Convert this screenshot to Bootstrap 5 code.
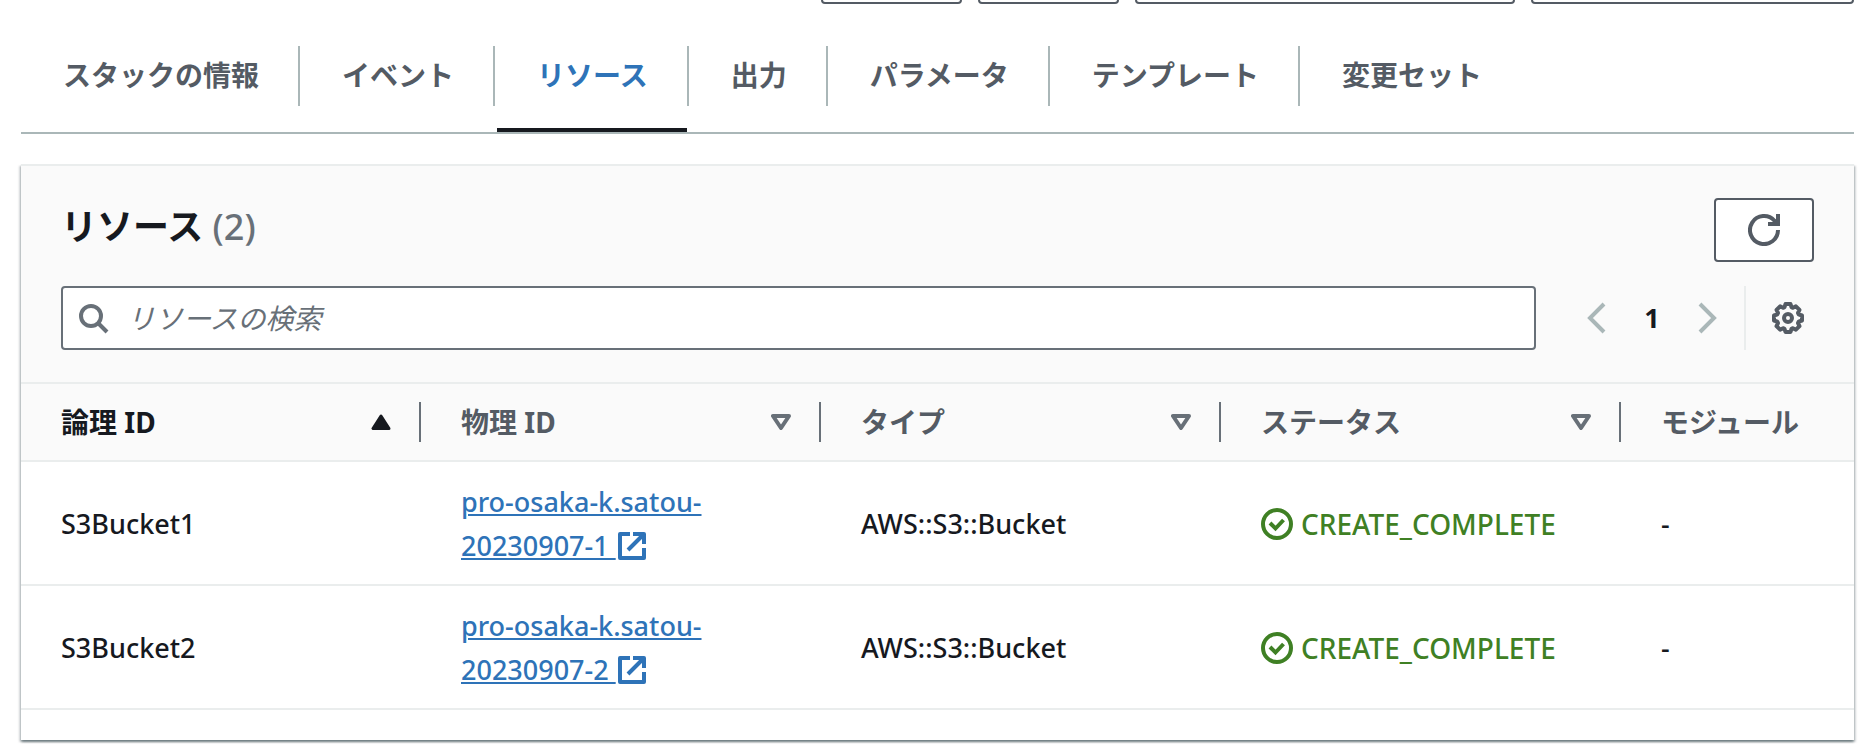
<!DOCTYPE html>
<html lang="ja">
<head>
<meta charset="utf-8">
<meta name="viewport" content="width=device-width, initial-scale=1">
<title>スタックのリソース</title>
<link href="https://cdn.jsdelivr.net/npm/bootstrap@5.3.0/dist/css/bootstrap.min.css" rel="stylesheet">
<style>
  :root { --ink: #16191f; --slate: #545b64; --steel: #687078; --mist: #aab7b8; --hair: #eaeded; --azure: #2e73b8; --leaf: #3f8024; }
  body { font-family: "Noto Sans", "Noto Sans CJK JP", sans-serif; font-size: 27px; line-height: 44px; color: var(--ink); background: #fff; }
  svg { display: block; flex: none; }
  .page { padding: 0 20px 14px 21px; }

  .stack-actions { height: 4px; gap: 16px; overflow: hidden; }
  .stack-actions .btn { height: 64px; border: 2px solid var(--slate); border-radius: 4px; background: #fff; }
  .w-short { width: 141px; }
  .w-long { width: 380px; }
  .w-mid { width: 323px; }

  .stack-tabs { padding-top: 42px; border-bottom: 2px solid var(--mist); font-size: 28px; font-weight: 700; }
  .stack-tabs .nav-item { display: flex; align-items: flex-start; padding-left: 2px; }
  .stack-tabs .nav-item:not(:last-child)::after { content: ""; width: 2px; height: 60px; background: var(--mist); }
  .stack-tabs .nav-link { height: 86px; padding: 6px 39px 0 40px; line-height: 46px; color: var(--slate); border: 0; border-bottom: 4px solid transparent; border-radius: 0; }
  .stack-tabs .nav-link.active { color: var(--azure); border-bottom-color: var(--ink); }

  .panel { margin-top: 30px; padding-bottom: 30px; border-top: 2px solid var(--hair); background: #fff; box-shadow: 0 2px 2px 0 rgba(0,28,36,.4), 2px 2px 2px 0 rgba(0,28,36,.15), -2px 2px 2px 0 rgba(0,28,36,.15); }
  .panel-head { padding: 32px 40px; background: #fafafa; border-bottom: 2px solid var(--hair); }
  .panel-title { font-size: 36px; line-height: 58px; font-weight: 700; }
  .panel-title .count { font-weight: 500; color: var(--steel); }
  .refresh { width: 100px; height: 64px; border: 2px solid var(--slate); border-radius: 4px; background: #fff; color: var(--slate); }
  .tool-row { margin-top: 24px; height: 64px; }
  .search-box { height: 64px; padding-left: 14px; gap: 18px; border: 2px solid var(--steel); border-radius: 4px; background: #fff; color: var(--steel); }
  .search-box input { border: 0; outline: 0; background: transparent; font-size: 28px; min-width: 0; }
  .search-box input::placeholder { color: var(--steel); font-style: italic; opacity: 1; }
  .pager { margin-left: 44px; margin-right: 20px; }
  .plain { border: 0; padding: 0; background: none; color: inherit; }
  .pager .plain { color: var(--mist); }
  .pager .page-no { width: 80px; color: var(--ink); font-weight: 700; }
  .gear { height: 64px; padding: 0 10px 0 26px; border-left: 2px solid var(--hair); color: var(--slate); }

  .res-table { table-layout: fixed; border-collapse: separate; border-spacing: 0; color: var(--ink); }
  .res-table .c-std { width: 400px; }
  .res-table > :not(caption) > * > * { padding: 18px 40px 16px; vertical-align: middle; color: var(--ink); border-bottom: 2px solid var(--hair); background: #fff; }
  .res-table > tbody { font-weight: 500; }
  .res-table > thead > tr > th { padding: 0 0 0 40px; background: #fafafa; }
  .head-cell { height: 76px; font-size: 28px; }
  .head-cell .plain { gap: 28px; padding-right: 28px; font-weight: 700; color: var(--slate); }
  .head-cell .sorted { color: var(--ink); }
  .head-cell .plain svg { color: var(--steel); }
  .head-cell .sorted svg { color: var(--ink); }
  .rule { width: 2px; height: 40px; background: var(--steel); }
  .res-link { color: var(--azure); text-decoration: underline; text-decoration-thickness: 2px; text-underline-offset: 2px; }
  .res-link svg { display: inline-block; vertical-align: -4px; margin-left: 2px; }
  .res-table .status { gap: 8px; margin-right: -40px; font-size: 28px; color: var(--leaf); }
</style>
</head>
<body>
<svg class="d-none" aria-hidden="true">
  <symbol id="i-desc" viewBox="0 0 20 16"><path d="M2 2h16L10 14z" fill="none" stroke="currentColor" stroke-width="4" stroke-linejoin="round"/></symbol>
  <symbol id="i-ext" viewBox="0 0 28 28"><path d="M12 2H2v24h24V16M15 2h11v10M26 2L10 18" fill="none" stroke="currentColor" stroke-width="4" stroke-linejoin="round"/></symbol>
  <symbol id="i-ok" viewBox="0 0 32 32"><circle cx="16" cy="16" r="14" fill="none" stroke="currentColor" stroke-width="4"/><path d="M9 15l5.500 5.500L22.500 12" fill="none" stroke="currentColor" stroke-width="4"/></symbol>
</svg>

<main class="page">
  <div class="stack-actions d-flex justify-content-end align-items-end">
    <button type="button" class="btn w-short" aria-label="削除"></button>
    <button type="button" class="btn w-short" aria-label="更新"></button>
    <button type="button" class="btn w-long" aria-label="スタックアクション"></button>
    <button type="button" class="btn w-mid" aria-label="スタックの作成"></button>
  </div>

  <ul class="nav stack-tabs">
    <li class="nav-item"><a class="nav-link" href="#info">スタックの情報</a></li>
    <li class="nav-item"><a class="nav-link" href="#events">イベント</a></li>
    <li class="nav-item"><a class="nav-link active" aria-current="page" href="#resources">リソース</a></li>
    <li class="nav-item"><a class="nav-link" href="#outputs">出力</a></li>
    <li class="nav-item"><a class="nav-link" href="#parameters">パラメータ</a></li>
    <li class="nav-item"><a class="nav-link" href="#template">テンプレート</a></li>
    <li class="nav-item"><a class="nav-link" href="#changesets">変更セット</a></li>
  </ul>

  <section class="panel" id="resources">
    <div class="panel-head">
      <div class="d-flex justify-content-between align-items-start">
        <h2 class="panel-title mb-0">リソース <span class="count">(2)</span></h2>
        <button type="button" class="refresh d-flex align-items-center justify-content-center p-0" aria-label="再読み込み">
          <svg width="32" height="32" viewBox="0 0 32 32" fill="none" stroke="currentColor" stroke-width="4"><path d="M30 16a14 14 0 1 1-3.500-9.200L30 10M30 0v10H20"/></svg>
        </button>
      </div>
      <div class="tool-row d-flex align-items-center">
        <label class="search-box d-flex align-items-center flex-grow-1">
          <svg width="32" height="32" viewBox="0 0 32 32" fill="none" stroke="currentColor" stroke-width="4"><circle cx="14" cy="14" r="10"/><path d="M21 21l9 9"/></svg>
          <input type="search" class="flex-grow-1 p-0" placeholder="リソースの検索" aria-label="リソースの検索">
        </label>
        <div class="pager d-flex align-items-center">
          <button type="button" class="plain" aria-label="前のページ"><svg width="32" height="32" viewBox="0 0 32 32" fill="none" stroke="currentColor" stroke-width="4"><path d="M24 2L10 16l14 14"/></svg></button>
          <button type="button" class="plain page-no">1</button>
          <button type="button" class="plain" aria-label="次のページ"><svg width="32" height="32" viewBox="0 0 32 32" fill="none" stroke="currentColor" stroke-width="4"><path d="M8 2l14 14L8 30"/></svg></button>
        </div>
        <div class="gear d-flex align-items-center">
          <button type="button" class="plain" aria-label="設定"><svg width="32" height="32" viewBox="0 0 32 32" fill="none" stroke="currentColor" stroke-width="4" stroke-linejoin="round"><path d="M13.500 2h5l1 3.200 1.400.6 3-1.500 3.600 3.600-1.500 3 .6 1.400L30 13.500v5l-3.400 1.200-.6 1.400 1.500 3-3.600 3.600-3-1.500-1.400.6-1 3.200h-5l-1-3.200-1.400-.6-3 1.500-3.600-3.600 1.500-3-.6-1.400L2 18.500v-5l3.400-1.200.6-1.400-1.500-3 3.600-3.600 3 1.500 1.400-.6z"/><circle cx="16" cy="16" r="4"/></svg></button>
        </div>
      </div>
    </div>

    <table class="table res-table mb-0">
      <colgroup><col class="c-std"><col class="c-std"><col class="c-std"><col class="c-std"><col></colgroup>
      <thead>
        <tr>
          <th scope="col" aria-sort="ascending"><div class="head-cell d-flex align-items-center"><button type="button" class="plain sorted d-flex flex-grow-1 align-items-center justify-content-between">論理 ID<svg width="20" height="16" viewBox="0 0 20 16"><path d="M10 2L2 14.500h16z" fill="currentColor" stroke="currentColor" stroke-width="3" stroke-linejoin="round"/></svg></button><span class="rule"></span></div></th>
          <th scope="col"><div class="head-cell d-flex align-items-center"><button type="button" class="plain d-flex flex-grow-1 align-items-center justify-content-between">物理 ID<svg width="20" height="16"><use href="#i-desc"/></svg></button><span class="rule"></span></div></th>
          <th scope="col"><div class="head-cell d-flex align-items-center"><button type="button" class="plain d-flex flex-grow-1 align-items-center justify-content-between">タイプ<svg width="20" height="16"><use href="#i-desc"/></svg></button><span class="rule"></span></div></th>
          <th scope="col"><div class="head-cell d-flex align-items-center"><button type="button" class="plain d-flex flex-grow-1 align-items-center justify-content-between">ステータス<svg width="20" height="16"><use href="#i-desc"/></svg></button><span class="rule"></span></div></th>
          <th scope="col"><div class="head-cell d-flex align-items-center"><button type="button" class="plain">モジュール</button></div></th>
        </tr>
      </thead>
      <tbody>
        <tr>
          <td>S3Bucket1</td>
          <td><a class="res-link" href="#bucket-1">pro-osaka-k.satou-<br>20230907-1 <svg width="28" height="28"><use href="#i-ext"/></svg></a></td>
          <td>AWS::S3::Bucket</td>
          <td><div class="status d-flex align-items-center"><svg width="32" height="32"><use href="#i-ok"/></svg>CREATE_COMPLETE</div></td>
          <td>-</td>
        </tr>
        <tr>
          <td>S3Bucket2</td>
          <td><a class="res-link" href="#bucket-2">pro-osaka-k.satou-<br>20230907-2 <svg width="28" height="28"><use href="#i-ext"/></svg></a></td>
          <td>AWS::S3::Bucket</td>
          <td><div class="status d-flex align-items-center"><svg width="32" height="32"><use href="#i-ok"/></svg>CREATE_COMPLETE</div></td>
          <td>-</td>
        </tr>
      </tbody>
    </table>
  </section>
</main>
<script src="https://cdn.jsdelivr.net/npm/bootstrap@5.3.0/dist/js/bootstrap.bundle.min.js"></script>
</body>
</html>
